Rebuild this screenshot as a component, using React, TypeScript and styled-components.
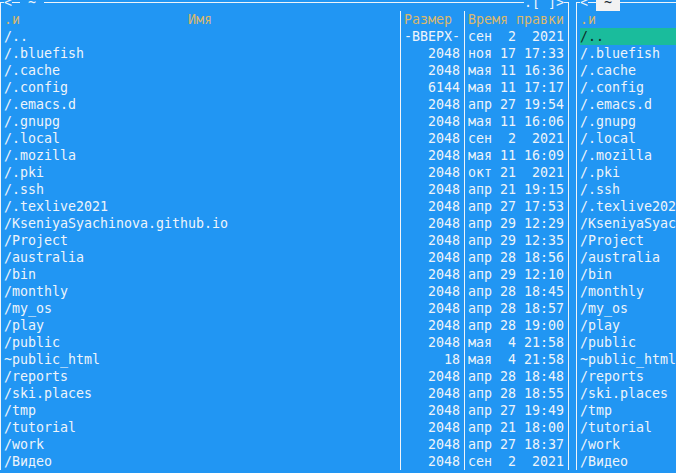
import React from 'react'
import styled, { createGlobalStyle } from 'styled-components'

const CELL = 8;
const ROW = 17;
const BLUE = '#2196f3';
const INK = '#eef4fa';
const HEAD = '#d9b86e';
const BAR = '#1abc9c';

type Entry = { name: string; size: string; time: string };

const entries: Entry[] = [
  { name: '/..', size: '-ВВЕРХ-', time: 'сен  2  2021' },
  { name: '/.bluefish', size: '2048', time: 'ноя 17 17:33' },
  { name: '/.cache', size: '2048', time: 'мая 11 16:36' },
  { name: '/.config', size: '6144', time: 'мая 11 17:17' },
  { name: '/.emacs.d', size: '2048', time: 'апр 27 19:54' },
  { name: '/.gnupg', size: '2048', time: 'мая 11 16:06' },
  { name: '/.local', size: '2048', time: 'сен  2  2021' },
  { name: '/.mozilla', size: '2048', time: 'мая 11 16:09' },
  { name: '/.pki', size: '2048', time: 'окт 21  2021' },
  { name: '/.ssh', size: '2048', time: 'апр 21 19:15' },
  { name: '/.texlive2021', size: '2048', time: 'апр 27 17:53' },
  { name: '/KseniyaSyachinova.github.io', size: '2048', time: 'апр 29 12:29' },
  { name: '/Project', size: '2048', time: 'апр 29 12:35' },
  { name: '/australia', size: '2048', time: 'апр 28 18:56' },
  { name: '/bin', size: '2048', time: 'апр 29 12:10' },
  { name: '/monthly', size: '2048', time: 'апр 28 18:45' },
  { name: '/my_os', size: '2048', time: 'апр 28 18:57' },
  { name: '/play', size: '2048', time: 'апр 28 19:00' },
  { name: '/public', size: '2048', time: 'мая  4 21:58' },
  { name: '~public_html', size: '18', time: 'мая  4 21:58' },
  { name: '/reports', size: '2048', time: 'апр 28 18:48' },
  { name: '/ski.places', size: '2048', time: 'апр 28 18:55' },
  { name: '/tmp', size: '2048', time: 'апр 27 19:49' },
  { name: '/tutorial', size: '2048', time: 'апр 21 18:00' },
  { name: '/work', size: '2048', time: 'апр 27 18:37' },
  { name: '/Видео', size: '2048', time: 'сен  2  2021' },
];

const GlobalStyle = createGlobalStyle`
  html, body {
    margin: 0;
    padding: 0;
    width: 676px;
    height: 473px;
    overflow: hidden;
    background: ${BLUE};
  }
`;

// the terminal is cropped: half of the first row and part of the first cell are off-screen
const Screen = styled.div`
  display: flex;
  margin: -6.5px 0 0 -4px;
  font-family: "DejaVu Sans Mono", monospace;
  font-size: 13.29px;
  line-height: ${ROW}px;
  color: ${INK};
  white-space: pre;
`;

const Panel = styled.div<{ $cols: number }>`
  flex: none;
  width: ${({ $cols }) => $cols * CELL}px;
  display: flex;
  flex-direction: column;
  overflow: hidden;
`;

const TopRow = styled.div`
  display: flex;
  height: ${ROW}px;
`;

const CornerLeft = styled.span`
  box-sizing: border-box;
  width: 4px;
  height: 9px;
  margin: 8px 0 0 4px;
  border-top: 1px solid ${INK};
  border-left: 1px solid ${INK};
`;

const CornerRight = styled.span`
  box-sizing: border-box;
  width: 5px;
  height: 9px;
  margin: 8px 3px 0 0;
  border-top: 1px solid ${INK};
  border-right: 1px solid ${INK};
`;

const HLine = styled.span<{ $cols?: number }>`
  flex: ${({ $cols }) => ($cols ? 'none' : '1')};
  width: ${({ $cols }) => ($cols ? `${$cols * CELL}px` : 'auto')};
  background: linear-gradient(
    to bottom,
    transparent 8px,
    ${INK} 8px,
    ${INK} 9px,
    transparent 9px
  );
`;

const Glyph = styled.span<{ $active?: boolean }>`
  flex: none;
  background: ${({ $active }) => ($active ? '#f2f2f2' : 'transparent')};
  color: ${({ $active }) => ($active ? '#1d2b36' : INK)};
`;

const Body = styled.div`
  display: flex;
  flex: 1;
`;

const VLine = styled.div`
  flex: none;
  width: ${CELL}px;
  background: linear-gradient(
    to right,
    transparent 4px,
    ${INK} 4px,
    ${INK} 5px,
    transparent 5px
  );
`;

const Column = styled.div<{ $cols?: number }>`
  flex: ${({ $cols }) => ($cols ? 'none' : '1')};
  width: ${({ $cols }) => ($cols ? `${$cols * CELL}px` : 'auto')};
  display: flex;
  flex-direction: column;
  overflow: hidden;
`;

const Cell = styled.div<{ $align?: 'left' | 'right'; $head?: boolean; $selected?: boolean }>`
  height: ${ROW}px;
  overflow: hidden;
  text-align: ${({ $align }) => $align ?? 'left'};
  color: ${({ $head, $selected }) => ($selected ? '#0e2b27' : $head ? HEAD : INK)};
  background: ${({ $selected }) => ($selected ? BAR : 'transparent')};
`;

const NameHead = styled.div`
  display: flex;
  height: ${ROW}px;
  color: ${HEAD};
`;

const SortMark = styled.span`
  flex: none;
  width: ${2 * CELL}px;
`;

const HeadTitle = styled.span`
  flex: 1;
  text-align: center;
`;

const FilePanel = () => (
  <Panel $cols={72}>
    <TopRow>
      <CornerLeft />
      <Glyph>{'<'}</Glyph>
      <HLine $cols={1} />
      <Glyph>{' ~ '}</Glyph>
      <HLine />
      <Glyph>{'.[^]>'}</Glyph>
      <CornerRight />
    </TopRow>
    <Body>
      <VLine />
      <Column $cols={49}>
        <NameHead>
          <SortMark>.и</SortMark>
          <HeadTitle>Имя</HeadTitle>
          <SortMark />
        </NameHead>
        {entries.map((e) => (
          <Cell key={e.name}>{e.name}</Cell>
        ))}
      </Column>
      <VLine />
      <Column $cols={7}>
        <Cell $head>Размер</Cell>
        {entries.map((e) => (
          <Cell key={e.name} $align="right">{e.size}</Cell>
        ))}
      </Column>
      <VLine />
      <Column $cols={12}>
        <Cell $head>Время правки</Cell>
        {entries.map((e) => (
          <Cell key={e.name}>{e.time}</Cell>
        ))}
      </Column>
      <VLine />
    </Body>
  </Panel>
);

const ActivePanel = () => (
  <Panel $cols={40}>
    <TopRow>
      <CornerLeft />
      <Glyph>{'<'}</Glyph>
      <HLine $cols={1} />
      <Glyph $active>{' ~ '}</Glyph>
      <HLine />
    </TopRow>
    <Body>
      <VLine />
      <Column>
        <Cell $head>.и</Cell>
        {entries.map((e, i) => (
          <Cell key={e.name} $selected={i === 0}>{e.name}</Cell>
        ))}
      </Column>
    </Body>
  </Panel>
);

export default function App() {
  return (
    <>
      <GlobalStyle />
      <Screen>
        <FilePanel />
        <ActivePanel />
      </Screen>
    </>
  );
}
